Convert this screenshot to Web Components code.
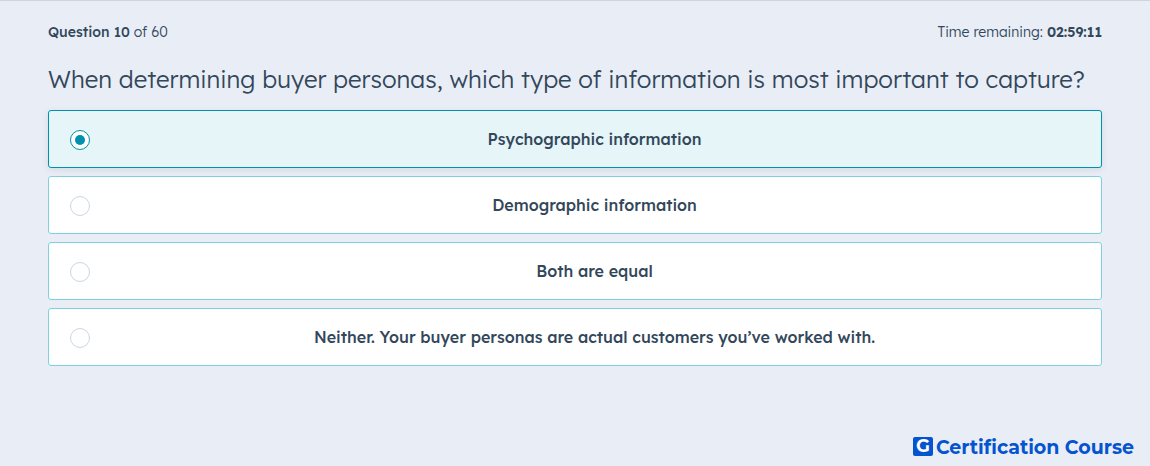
<!DOCTYPE html>
<html lang="en">
<head>
<meta charset="utf-8">
<meta name="viewport" content="width=device-width, initial-scale=1">
<title>Certification exam</title>
<style>
  html { height: 100%; }
  body {
    margin: 0;
    min-height: 100%;
    display: grid;
    background: #e9eef6;
    color: #33475b;
    font-family: Lexend, "Lexend Deca", Inter, "Open Sans", sans-serif;
    font-size: 14px;
    font-weight: 300;
  }
</style>
</head>
<body>
<exam-page>
  <exam-status slot="status" current="10" total="60" remaining="02:59:11"></exam-status>
  <exam-question slot="question" heading="When determining buyer personas, which type of information is most important to capture?">
    <answer-option checked>Psychographic information</answer-option>
    <answer-option>Demographic information</answer-option>
    <answer-option>Both are equal</answer-option>
    <answer-option>Neither. Your buyer personas are actual customers you’ve worked with.</answer-option>
  </exam-question>
  <brand-mark slot="brand">Certification Course</brand-mark>
</exam-page>

<script>
class ExamPage extends HTMLElement {
  constructor() {
    super();
    this.attachShadow({ mode: 'open' }).innerHTML = `
      <style>
        :host { display: flex; flex-direction: column; box-sizing: border-box; min-height: 100vh; border-top: 1px solid #cbd6e2; }
        main { flex: 1; padding: 19px 48px; }
        footer { display: flex; justify-content: flex-end; padding: 0 16px 6px; }
      </style>
      <main><slot name="status"></slot><slot name="question"></slot></main>
      <footer><slot name="brand"></slot></footer>`;
  }
}

class ExamStatus extends HTMLElement {
  constructor() {
    super();
    this.attachShadow({ mode: 'open' }).innerHTML = `
      <style>
        :host { display: flex; justify-content: space-between; gap: 24px; font-size: 14px; line-height: 24px; }
        .count b { font-weight: 500; }
        .time b { font-weight: 600; }
      </style>
      <span class="count"><b>Question ${this.getAttribute('current')}</b> of ${this.getAttribute('total')}</span>
      <span class="time">Time remaining: <b>${this.getAttribute('remaining')}</b></span>`;
  }
}

class ExamQuestion extends HTMLElement {
  constructor() {
    super();
    this.attachShadow({ mode: 'open' }).innerHTML = `
      <style>
        :host { display: block; padding-top: 17px; }
        h1 { margin: 0 0 12px; font-size: 24px; line-height: 37px; font-weight: 300; }
        .options { display: grid; gap: 8px; }
      </style>
      <h1 id="heading">${this.getAttribute('heading')}</h1>
      <div class="options" role="radiogroup" aria-labelledby="heading"><slot></slot></div>`;
  }
}

class AnswerOption extends HTMLElement {
  constructor() {
    super();
    this.attachShadow({ mode: 'open' }).innerHTML = `
      <style>
        :host { display: block; }
        label {
          display: flex; align-items: center; gap: 20px;
          box-sizing: border-box; min-height: 58px; padding: 16px 22px 16px 21px;
          border: 1px solid #7fd1de; border-radius: 3px;
          background: #fff; cursor: pointer;
          font-size: 16px; line-height: 24px; font-weight: 500;
        }
        label:has(:checked) { background: #e5f5f8; border-color: #0091ae; box-shadow: 0 2px 6px rgba(51, 71, 91, .12); }
        input {
          appearance: none; flex: none; display: grid; place-items: center;
          box-sizing: border-box; width: 20px; height: 20px; margin: 2px 0 0;
          border: 1px solid #cbd6e2; border-radius: 50%; background: #fff;
        }
        input:checked { border-color: #0091ae; }
        input:checked::before { content: ""; width: 10px; height: 10px; border-radius: 50%; background: #0091ae; }
        .text { flex: 1; text-align: center; }
      </style>
      <label for="choice"><input type="radio" id="choice" name="answer"><span class="text"><slot></slot></span></label>`;
    const input = this.shadowRoot.querySelector('input');
    input.checked = this.hasAttribute('checked');
    input.addEventListener('change', () => {
      for (const other of this.parentElement.querySelectorAll('answer-option')) {
        if (other !== this) other.shadowRoot.querySelector('input').checked = false;
      }
    });
  }
}

class BrandMark extends HTMLElement {
  constructor() {
    super();
    this.attachShadow({ mode: 'open' }).innerHTML = `
      <style>
        :host { display: flex; align-items: flex-start; gap: 3px; color: #0554cf; font: 700 19px/24px Montserrat, Inter, sans-serif; }
        .tile { display: grid; place-items: center; width: 20px; height: 19px; margin-top: 1px; border-radius: 2px; background: #0554cf; color: #fff; font-size: 18px; line-height: 19px; font-weight: 700; }
      </style>
      <span class="tile">G</span><span><slot></slot></span>`;
  }
}

customElements.define('exam-page', ExamPage);
customElements.define('exam-status', ExamStatus);
customElements.define('exam-question', ExamQuestion);
customElements.define('answer-option', AnswerOption);
customElements.define('brand-mark', BrandMark);
</script>
</body>
</html>
